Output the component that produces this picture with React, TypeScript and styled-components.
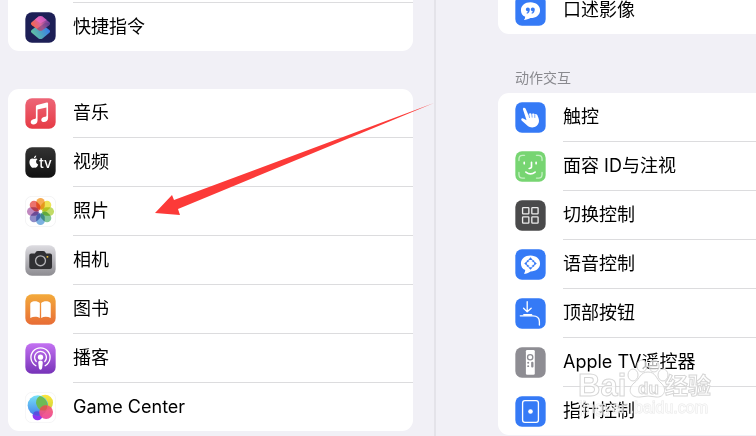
import React from "react";
import styled, { createGlobalStyle } from "styled-components";

const GlobalStyle = createGlobalStyle`
  * { box-sizing: border-box; }
  body {
    margin: 0;
    background: #f1f0f6;
    color: #000;
    font-family: Inter, "Noto Sans CJK SC", sans-serif;
  }
`;

const Screen = styled.main`
  position: relative;
  display: grid;
  grid-template-columns: minmax(0, 436fr) minmax(0, 320fr);
  height: 100vh;
  overflow: hidden;
`;

const Sidebar = styled.nav`
  display: flex;
  flex-direction: column;
  gap: 38px;
  padding: 0 21px 0 8px;
  border-right: 2px solid #e4e3e9;
`;

const Detail = styled.section`
  display: flex;
  flex-direction: column;
  margin-top: -17px;
  padding-left: 62px;
`;

const Card = styled.ul<{ $continued?: boolean; $bleed?: boolean }>`
  flex: none;
  margin: 0;
  padding: ${(p) => (p.$continued ? "2px" : "0")} 0 0;
  list-style: none;
  background: #fff;
  border-radius: ${(p) =>
    p.$continued
      ? p.$bleed ? "0 0 0 11px" : "0 0 11px 11px"
      : p.$bleed ? "11px 0 0 11px" : "11px"};
`;

const Item = styled.li<{ $divided: boolean }>`
  &::before {
    content: "";
    display: ${(p) => (p.$divided ? "block" : "none")};
    height: 1px;
    margin-left: 65px;
    background: #dcdcde;
  }
`;

const RowButton = styled.button`
  display: flex;
  align-items: center;
  gap: 17px;
  width: 100%;
  height: 48px;
  padding: 0 17px;
  border: 0;
  background: none;
  color: inherit;
  font: inherit;
  font-size: 18px;
  line-height: 24px;
  text-align: left;
  white-space: nowrap;
`;

const Icon = styled.svg`
  flex: none;
  width: 31px;
  height: 31px;
`;

const GroupTitle = styled.h2`
  margin: 0;
  padding: 34px 17px 5px;
  color: #8a8a8f;
  font-size: 14px;
  font-weight: 400;
  line-height: 20px;
`;

const Petal = styled.rect`
  mix-blend-mode: multiply;
`;

const Pointer = styled.svg`
  position: absolute;
  left: 155px;
  top: 103px;
  width: 280px;
  height: 113px;
  pointer-events: none;
`;

const Watermark = styled.svg`
  position: absolute;
  right: 40px;
  bottom: 16px;
  width: 140px;
  height: 66px;
  overflow: visible;
  pointer-events: none;
`;

function Tile({ fill, stroke, children }: { fill: string; stroke?: string; children: React.ReactNode }) {
  return (
    <Icon viewBox="0 0 94 94" aria-hidden="true">
      <rect x="1" y="1" width="92" height="92" rx="20" fill={fill} stroke={stroke} strokeWidth="2" />
      {children}
    </Icon>
  );
}

function Gradient({ id, from, to, diagonal }: { id: string; from: string; to: string; diagonal?: boolean }) {
  return (
    <linearGradient id={id} x1="0" y1={diagonal ? "0.7" : "0"} x2={diagonal ? "1" : "0"} y2={diagonal ? "0.3" : "1"}>
      <stop stopColor={from} />
      <stop offset="1" stopColor={to} />
    </linearGradient>
  );
}

const blue = "#357af6";

const icons = {
  shortcuts: (
    <Tile fill="#1d1f56">
      <Gradient id="scLow" from="#65c79a" to="#3578ef" diagonal />
      <linearGradient id="scTop" x1="0.1" y1="0.7" x2="0.9" y2="0.4">
        <stop stopColor="#f4664f" />
        <stop offset="0.5" stopColor="#d9659c" />
        <stop offset="1" stopColor="#79409a" />
      </linearGradient>
      <path d="M42 38 L21 54 Q15 59 21 64 L41 80 Q47 84 53 80 L73 64 Q79 59 73 54 L52 38Z" fill="url(#scLow)" />
      <path d="M41 14 Q47 10 53 14 L73 30 Q79 35 73 40 L53 55 Q47 59 41 55 L21 40 Q15 35 21 30Z" fill="url(#scTop)" />
      <path d="M76 35 Q76 38 73 40 L53 55 Q47 59 41 55 L36 51 L62 32Z" fill="#413b83" opacity=".4" />
      <path d="M41 14 Q47 10 53 14 L66 24 L47 34 L30 23Z" fill="#ef68d0" opacity=".6" />
    </Tile>
  ),
  music: (
    <Tile fill="url(#music)">
      <Gradient id="music" from="#ed6577" to="#e63b45" />
      <path d="M33 26 Q33 22 37 21 L66 14 Q70 13 70 17 V61 C70 69 64 73 57 73 C48 73 47 63 54 59 C58 57 65 58 65 53 V29 L38 35 V68 C38 76 32 80 25 80 C16 80 15 70 22 66 C26 64 33 65 33 60Z" fill="#fff" />
    </Tile>
  ),
  tv: (
    <Tile fill="url(#tv)">
      <Gradient id="tv" from="#333" to="#111" />
      <path d="M28 36 C31 36 34 33 38 37 C31 41 33 50 40 53 C37 61 33 64 28 62 C23 64 20 63 16 56 C11 46 14 35 22 35 C25 35 26 36 28 36Z M27 34 C27 30 30 27 34 26 C34 31 31 34 27 34Z" fill="#fff" />
      <text x="43" y="63" fill="#fff" fontSize="41" fontWeight="500" fontFamily="Inter">tv</text>
    </Tile>
  ),
  photos: (
    <Tile fill="#fff" stroke="#ececee">
      {["#f5a13a", "#ecdf3c", "#b9d651", "#72c087", "#6aa6dc", "#7f7cc0", "#b878b6", "#e9605a"].map((color, i) => (
        <Petal key={color} x="34" y="6" width="26" height="36" rx="13" fill={color} opacity=".88" transform={`rotate(${i * 45} 47 47)`} />
      ))}
      <circle cx="47" cy="47" r="4" fill="#fff" opacity=".7" />
    </Tile>
  ),
  camera: (
    <Tile fill="url(#camera)">
      <Gradient id="camera" from="#dddce1" to="#8d8c91" />
      <path d="M13 32 Q13 26 19 26 H30 L34 20 Q36 18 39 18 H55 Q58 18 60 20 L64 26 H76 Q82 26 82 32 V67 Q82 73 76 73 H19 Q13 73 13 67Z" fill="#303033" />
      <circle cx="47" cy="48" r="15" fill="none" stroke="#b5b5b8" strokeWidth="4" />
      <circle cx="68" cy="36" r="3" fill="#f7c737" />
    </Tile>
  ),
  books: (
    <Tile fill="url(#books)">
      <Gradient id="books" from="#f3aa3b" to="#e86d36" />
      <path d="M45 27 C38 21 25 20 18 26 Q16 28 16 31 V73 C25 68 37 68 45 73Z M49 27 C56 21 69 20 76 26 Q78 28 78 31 V73 C69 68 57 68 49 73Z" fill="#fff" />
    </Tile>
  ),
  podcasts: (
    <Tile fill="url(#podcasts)">
      <Gradient id="podcasts" from="#c371f2" to="#7733b8" />
      <g fill="none" stroke="#fff" strokeWidth="4" strokeLinecap="round">
        <path d="M33 69 A29 29 0 1 1 61 69" />
        <path d="M34 56 A18 18 0 1 1 60 56" />
      </g>
      <circle cx="47" cy="43" r="8" fill="#fff" />
      <path d="M40 60 Q40 53 47 53 Q54 53 54 60 L52 76 Q51 81 47 81 Q43 81 42 76Z" fill="#fff" />
    </Tile>
  ),
  gameCenter: (
    <Tile fill="#fff" stroke="#f0f0f1">
      <Gradient id="gcBlue" from="#6fe0f8" to="#3779e8" />
      <Gradient id="gcYellow" from="#fde63d" to="#ccd33b" />
      <Gradient id="gcRed" from="#f2606a" to="#ee4398" />
      <circle cx="38" cy="71" r="15" fill="#8f35ef" />
      <circle cx="61" cy="32" r="24" fill="url(#gcYellow)" />
      <circle cx="39" cy="41" r="31" fill="url(#gcBlue)" opacity=".94" />
      <path d="M45 12 A24 24 0 0 0 61 56 L66 55 A31 31 0 0 0 45 12Z" fill="#6dbb55" />
      <path d="M26 68 A31 31 0 0 0 51 69 A15 15 0 0 0 26 63Z" fill="#5950df" />
      <circle cx="64" cy="61" r="21" fill="url(#gcRed)" opacity=".93" />
      <path d="M44 55 A21 21 0 0 1 66 40 Q70 49 61 56Z" fill="#cf5b43" opacity=".7" />
    </Tile>
  ),
  audioDescription: (
    <Tile fill={blue}>
      <path d="M47 22 C64 22 76 33 76 46 C76 60 64 70 47 70 C41 73 34 76 27 76 Q31 72 31 66 C22 62 18 55 18 46 C18 32 30 22 47 22Z" fill="#fff" />
      <path d="M45 43 C45 50 42 55 36 57 L35 54 Q39 52 39 49 C31 50 31 38 39 38 Q45 38 45 43Z M60 43 C60 50 57 55 51 57 L50 54 Q54 52 54 49 C46 50 46 38 54 38 Q60 38 60 43Z" fill={blue} />
    </Tile>
  ),
  touch: (
    <Tile fill={blue}>
      <path d="M24 22 C23 17 29 15 32 20 L41 40 Q41 34 46 34 Q49 34 51 38 Q52 34 56 35 Q59 35 60 39 Q62 35 66 38 Q68 39 69 43 C74 52 75 64 66 72 C58 79 46 79 38 72 L20 56 C17 52 20 48 25 50 L35 55Z" fill="#fff" />
      <path d="M42 38 L44 47 M51 38 L52 46 M60 40 L60 47" stroke={blue} strokeWidth="2" strokeLinecap="round" />
    </Tile>
  ),
  face: (
    <Tile fill="#77d572">
      <g fill="none" strokeLinecap="round" strokeWidth="4">
        <path d="M12 29 V24 Q12 13 23 13 H29 M65 13 H71 Q82 13 82 24 V29 M82 65 V71 Q82 82 71 82 H65 M29 82 H23 Q12 82 12 71 V65" stroke="#c5f0c3" />
        <path d="M28 34 V39 M64 34 V39 M50 34 V48 Q50 53 43 53 M33 64 Q47 75 61 64" stroke="#fff" strokeWidth="5" />
      </g>
    </Tile>
  ),
  switchControl: (
    <Tile fill="#4a4a4b">
      <g fill="none" stroke="#ececec" strokeWidth="4">
        <rect x="23" y="23" width="19" height="19" rx="2" />
        <rect x="51" y="23" width="19" height="19" rx="2" />
        <rect x="23" y="51" width="19" height="19" rx="2" />
        <rect x="51" y="51" width="19" height="19" rx="2" />
      </g>
    </Tile>
  ),
  voiceControl: (
    <Tile fill={blue}>
      <path d="M47 20 C64 20 76 31 76 44 C76 58 64 68 47 68 C41 72 34 75 27 75 Q31 70 31 64 C22 60 18 53 18 44 C18 30 30 20 47 20Z" fill="#fff" />
      <path d="M47 25 L54 33 H40Z M47 63 L40 55 H54Z M28 44 L36 37 V51Z M66 44 L58 51 V37Z" fill={blue} />
      <path d="M38 40 V36 H43 M51 36 H56 V40 M56 48 V52 H51 M43 52 H38 V48" fill="none" stroke={blue} strokeWidth="4" />
    </Tile>
  ),
  topButton: (
    <Tile fill={blue}>
      <g fill="none" stroke="#fff" strokeWidth="4" strokeLinecap="round" strokeLinejoin="round">
        <path d="M37 11 V41 M26 31 L37 42 L49 31 M16 54 H54 Q74 54 74 72 V82" />
        <path d="M27 51 H50" strokeWidth="5" />
      </g>
    </Tile>
  ),
  remote: (
    <Tile fill="#8e8d93">
      <rect x="33" y="9" width="27" height="75" rx="4" fill="#fff" />
      <circle cx="46" cy="31" r="8" fill="none" stroke="#8e8d93" strokeWidth="4" />
      <g fill="#8e8d93">
        <circle cx="40" cy="48" r="3" />
        <circle cx="40" cy="58" r="3" />
        <rect x="49" y="45" width="7" height="17" rx="3" />
      </g>
    </Tile>
  ),
  pointerControl: (
    <Tile fill={blue}>
      <rect x="23" y="14" width="48" height="66" rx="7" fill="none" stroke="#fff" strokeWidth="4" />
      <circle cx="47" cy="47" r="7" fill="#fff" />
    </Tile>
  ),
};

type Entry = { icon: keyof typeof icons; label: string };

const media: Entry[] = [
  { icon: "music", label: "音乐" },
  { icon: "tv", label: "视频" },
  { icon: "photos", label: "照片" },
  { icon: "camera", label: "相机" },
  { icon: "books", label: "图书" },
  { icon: "podcasts", label: "播客" },
  { icon: "gameCenter", label: "Game Center" },
];

const motor: Entry[] = [
  { icon: "touch", label: "触控" },
  { icon: "face", label: "面容 ID与注视" },
  { icon: "switchControl", label: "切换控制" },
  { icon: "voiceControl", label: "语音控制" },
  { icon: "topButton", label: "顶部按钮" },
  { icon: "remote", label: "Apple TV遥控器" },
  { icon: "pointerControl", label: "指针控制" },
];

function Group({ entries, continued, bleed }: { entries: Entry[]; continued?: boolean; bleed?: boolean }) {
  return (
    <Card $continued={continued} $bleed={bleed}>
      {entries.map((entry, i) => (
        <Item key={entry.label} $divided={i > 0 || !!continued}>
          <RowButton type="button">
            {icons[entry.icon]}
            {entry.label}
          </RowButton>
        </Item>
      ))}
    </Card>
  );
}

export default function App() {
  return (
    <>
      <GlobalStyle />
      <Screen>
        <Sidebar>
          <Group continued entries={[{ icon: "shortcuts", label: "快捷指令" }]} />
          <Group entries={media} />
        </Sidebar>
        <Detail>
          <Group continued bleed entries={[{ icon: "audioDescription", label: "口述影像" }]} />
          <GroupTitle>动作交互</GroupTitle>
          <Group bleed entries={motor} />
        </Detail>
        <Pointer viewBox="0 0 280 113" aria-hidden="true">
          <path d="M0 110 L17 92 L19 97 L279 0 L23 106 L25 112Z" fill="#fc3a38" />
        </Pointer>
        <Watermark viewBox="0 0 140 66">
          <g fill="#fff" fillOpacity=".7" stroke="#d6d6d6" strokeWidth="1">
            <text x="2" y="42" fontSize="31" fontWeight="700" fontFamily="Liberation Sans">Bai</text>
            <ellipse cx="57" cy="21" rx="5" ry="6" />
            <ellipse cx="66" cy="12" rx="5" ry="6" />
            <ellipse cx="78" cy="12" rx="5" ry="6" />
            <ellipse cx="87" cy="21" rx="5" ry="6" />
            <path d="M72 18 C80 18 80 25 85 29 C92 35 88 44 80 43 Q72 41 64 43 C54 44 51 35 58 29 C64 25 64 18 72 18Z" />
            <text x="62" y="40" fontSize="17" fontWeight="700" fontFamily="Liberation Sans">du</text>
            <text x="89" y="40" fontSize="23" fontWeight="700" fontFamily="Noto Sans CJK SC">经验</text>
          </g>
          <text x="3" y="59" fontSize="16" fontFamily="Liberation Sans" fill="#fff" fillOpacity=".7" stroke="#d4d4d4" strokeOpacity=".5" strokeWidth="1" paintOrder="stroke">jingyan.baidu.com</text>
        </Watermark>
      </Screen>
    </>
  );
}
